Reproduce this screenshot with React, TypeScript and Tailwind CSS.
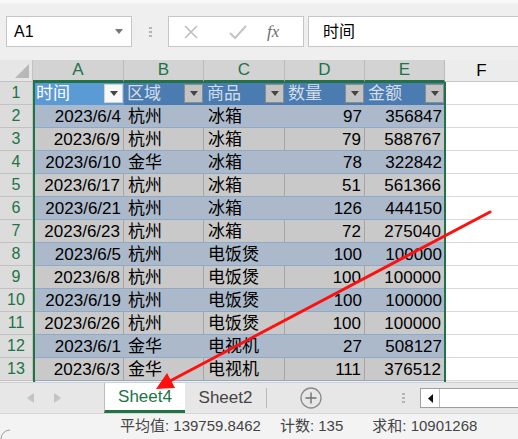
const rows: [string, string, string, string, string][] = [
  ["2023/6/4", "杭州", "冰箱", "97", "356847"],
  ["2023/6/9", "杭州", "冰箱", "79", "588767"],
  ["2023/6/10", "金华", "冰箱", "78", "322842"],
  ["2023/6/17", "杭州", "冰箱", "51", "561366"],
  ["2023/6/21", "杭州", "冰箱", "126", "444150"],
  ["2023/6/23", "杭州", "冰箱", "72", "275040"],
  ["2023/6/5", "杭州", "电饭煲", "100", "100000"],
  ["2023/6/8", "杭州", "电饭煲", "100", "100000"],
  ["2023/6/19", "杭州", "电饭煲", "100", "100000"],
  ["2023/6/26", "杭州", "电饭煲", "100", "100000"],
  ["2023/6/1", "金华", "电视机", "27", "508127"],
  ["2023/6/3", "金华", "电视机", "111", "376512"],
];

const widths = ["w-[91px]", "w-[80px]", "w-[81px]", "w-[80px]", "w-[80px]"];
const headers = ["时间", "区域", "商品", "数量", "金额"];

function RowHead({ n }: { n: number }) {
  return (
    <div className="flex h-full w-[33px] shrink-0 items-center justify-center border-r border-b border-[#c2c2c2] bg-[#dcdcdc] text-[16px] text-[#217346]">
      {n}
    </div>
  );
}

function FilterButton({ active }: { active?: boolean }) {
  return (
    <span
      className={`flex h-[19px] w-[19px] shrink-0 items-center justify-center border ${
        active ? "border-[#d0d0d0] bg-[#f7f7f7]" : "border-[#8c8c8c] bg-[#c3c3c3]"
      }`}
    >
      <svg width="8" height="5" viewBox="0 0 8 5">
        <path d="M0 0h8L4 5z" fill="#444" />
      </svg>
    </span>
  );
}

function HeaderRow() {
  return (
    <div className="flex h-[23px]">
      <RowHead n={1} />
      {headers.map((h, i) => (
        <div
          key={h}
          className={`flex ${widths[i]} shrink-0 items-center justify-between pl-[3px] pr-[1px] ${
            i === 0 ? "bg-[#5b9bd5] text-white" : "bg-[#4a7cb1] text-[#d5dde8]"
          }`}
        >
          <span className="text-[17px] leading-none">{h}</span>
          <FilterButton active={i === 0} />
        </div>
      ))}
      <div className="flex-1 border-b border-[#d9d9d9] bg-white" />
    </div>
  );
}

function DataRow({ n, r }: { n: number; r: string[] }) {
  const blue = n % 2 === 0;
  return (
    <div className="flex h-[23px]">
      <RowHead n={n} />
      {r.map((v, i) => (
        <div
          key={i}
          className={`flex ${widths[i]} shrink-0 items-center border-b border-[#8eaacb] text-[17px] leading-none text-black ${
            blue ? "bg-[#acb9ca]" : "border-r border-r-[#a3a3a3] bg-[#c9c9c9]"
          } ${i === 1 || i === 2 ? "justify-start pl-[4px]" : "justify-end pr-[3px]"}`}
        >
          {v}
        </div>
      ))}
      <div className="flex-1 border-b border-[#d9d9d9] bg-white" />
    </div>
  );
}

export default function App() {
  return (
    <div className="relative h-[439px] w-[518px] overflow-hidden bg-[#efefef] font-['Liberation_Sans','Noto_Sans_CJK_SC',sans-serif]">
      {/* formula bar */}
      <div className="h-[60px] border-t-[3px] border-[#f8f8f8] bg-[#efefef]">
        <div className="flex items-center pt-[13px]">
          <div className="ml-[6px] flex h-[31px] w-[126px] items-center justify-between border border-[#c6c6c6] bg-white pl-[7px] pr-[8px]">
            <span className="text-[16px] text-black">A1</span>
            <svg width="8" height="5" viewBox="0 0 8 5">
              <path d="M0 0h8L4 5z" fill="#777" />
            </svg>
          </div>
          <div className="ml-[17px] flex flex-col gap-[2px]">
            <span className="h-[2px] w-[3px] bg-[#b4b4b4]" />
            <span className="h-[2px] w-[3px] bg-[#b4b4b4]" />
            <span className="h-[2px] w-[3px] bg-[#b4b4b4]" />
          </div>
          <div className="ml-[16px] flex h-[31px] w-[136px] items-center border border-[#c6c6c6] bg-white">
            <svg className="ml-[14px]" width="16" height="16" viewBox="0 0 16 16">
              <path d="M2 2l12 12M14 2L2 14" stroke="#bdbdbd" strokeWidth="1.6" fill="none" />
            </svg>
            <svg className="ml-[30px]" width="18" height="16" viewBox="0 0 18 16">
              <path d="M1 9l5 5L17 2" stroke="#c4c4c4" strokeWidth="2" fill="none" />
            </svg>
            <span className="ml-[20px] font-['Liberation_Serif',serif] text-[17px] italic text-[#6f6f6f]">fx</span>
          </div>
          <div className="ml-[4px] flex h-[31px] flex-1 items-center border border-r-0 border-[#c6c6c6] bg-white pl-[14px]">
            <span className="text-[16px] text-black">时间</span>
          </div>
        </div>
      </div>

      {/* column headers */}
      <div className="flex h-[22px]">
        <div className="relative w-[33px] shrink-0 border-r border-b border-[#c2c2c2] bg-[#e6e6e6]">
          <svg className="absolute right-[3px] bottom-[3px]" width="14" height="14" viewBox="0 0 14 14">
            <path d="M14 0v14H0z" fill="#b8b8b8" />
          </svg>
        </div>
        {["A", "B", "C", "D", "E"].map((c, i) => (
          <div
            key={c}
            className={`flex ${widths[i]} shrink-0 items-center justify-center border-r border-b-2 border-r-[#bcbcbc] border-b-[#217346] bg-[#d3d3d3] text-[17px] text-[#217346]`}
          >
            {c}
          </div>
        ))}
        <div className="flex flex-1 items-center justify-center border-b border-[#c6c6c6] bg-[#ececec] text-[17px] text-black">
          F
        </div>
      </div>

      {/* grid */}
      <div className="relative h-[300px] overflow-hidden">
        <HeaderRow />
        {rows.map((r, i) => (
          <DataRow key={i} n={i + 2} r={r} />
        ))}
        <div className="pointer-events-none absolute top-[-1px] left-[33px] h-[320px] w-[413px] border-2 border-[#217346]" />
      </div>

      {/* sheet tabs */}
      <div className="flex h-[31px] items-center border-t border-[#d0d0d0] bg-[#e7e7e7]">
        <div className="flex w-[104px] items-center pl-[27px] gap-[20px]">
          <svg width="7" height="10" viewBox="0 0 7 10">
            <path d="M7 0v10L0 5z" fill="#c3c3c3" />
          </svg>
          <svg width="7" height="10" viewBox="0 0 7 10">
            <path d="M0 0v10l7-5z" fill="#c3c3c3" />
          </svg>
        </div>
        <div className="flex h-full w-[81px] items-center justify-center border-b-[3px] border-l border-[#217346] border-l-[#bdbdbd] bg-white text-[17px] text-[#217346]">
          Sheet4
        </div>
        <div className="flex h-full w-[81px] items-center justify-center text-[17px] text-[#444]">Sheet2</div>
        <span className="h-[20px] w-px bg-[#b8b8b8]" />
        <svg className="ml-[33px]" width="22" height="22" viewBox="0 0 22 22">
          <circle cx="11" cy="11" r="10" stroke="#8a8a8a" strokeWidth="1.3" fill="none" />
          <path d="M11 5.5v11M5.5 11h11" stroke="#707070" strokeWidth="1.4" />
        </svg>
        <div className="ml-[80px] flex flex-col gap-[2px]">
          <span className="h-[2px] w-[3px] bg-[#b4b4b4]" />
          <span className="h-[2px] w-[3px] bg-[#b4b4b4]" />
          <span className="h-[2px] w-[3px] bg-[#b4b4b4]" />
        </div>
        <div className="ml-[15px] flex h-[20px] flex-1 border border-r-0 border-[#9f9f9f] bg-white">
          <div className="flex w-[19px] items-center justify-center border-r border-[#bdbdbd]">
            <svg width="5" height="9" viewBox="0 0 5 9">
              <path d="M5 0v9L0 4.5z" fill="#111" />
            </svg>
          </div>
        </div>
      </div>

      {/* status bar */}
      <div className="relative flex h-[26px] items-center border-t border-[#d6d6d6] bg-[#f3f3f3] text-[15px] text-[#444]">
        <span className="ml-[120px]">平均值: 139759.8462</span>
        <span className="ml-[19px]">计数: 135</span>
        <span className="ml-[29px]">求和: 10901268</span>
        <svg className="absolute left-0 bottom-0" width="12" height="10" viewBox="0 0 12 10">
          <path d="M10 1 A 9 9 0 0 0 1 10" stroke="#9a9a9a" strokeWidth="1" fill="none" />
        </svg>
      </div>

      {/* red annotation arrow */}
      <svg className="pointer-events-none absolute inset-0" width="518" height="439" viewBox="0 0 518 439">
        <line x1="490" y1="212" x2="170" y2="381" stroke="#ff1010" strokeWidth="3" strokeLinecap="round" />
        <polygon points="156,389 175,388 167,373" fill="#ff1010" />
      </svg>
    </div>
  );
}
